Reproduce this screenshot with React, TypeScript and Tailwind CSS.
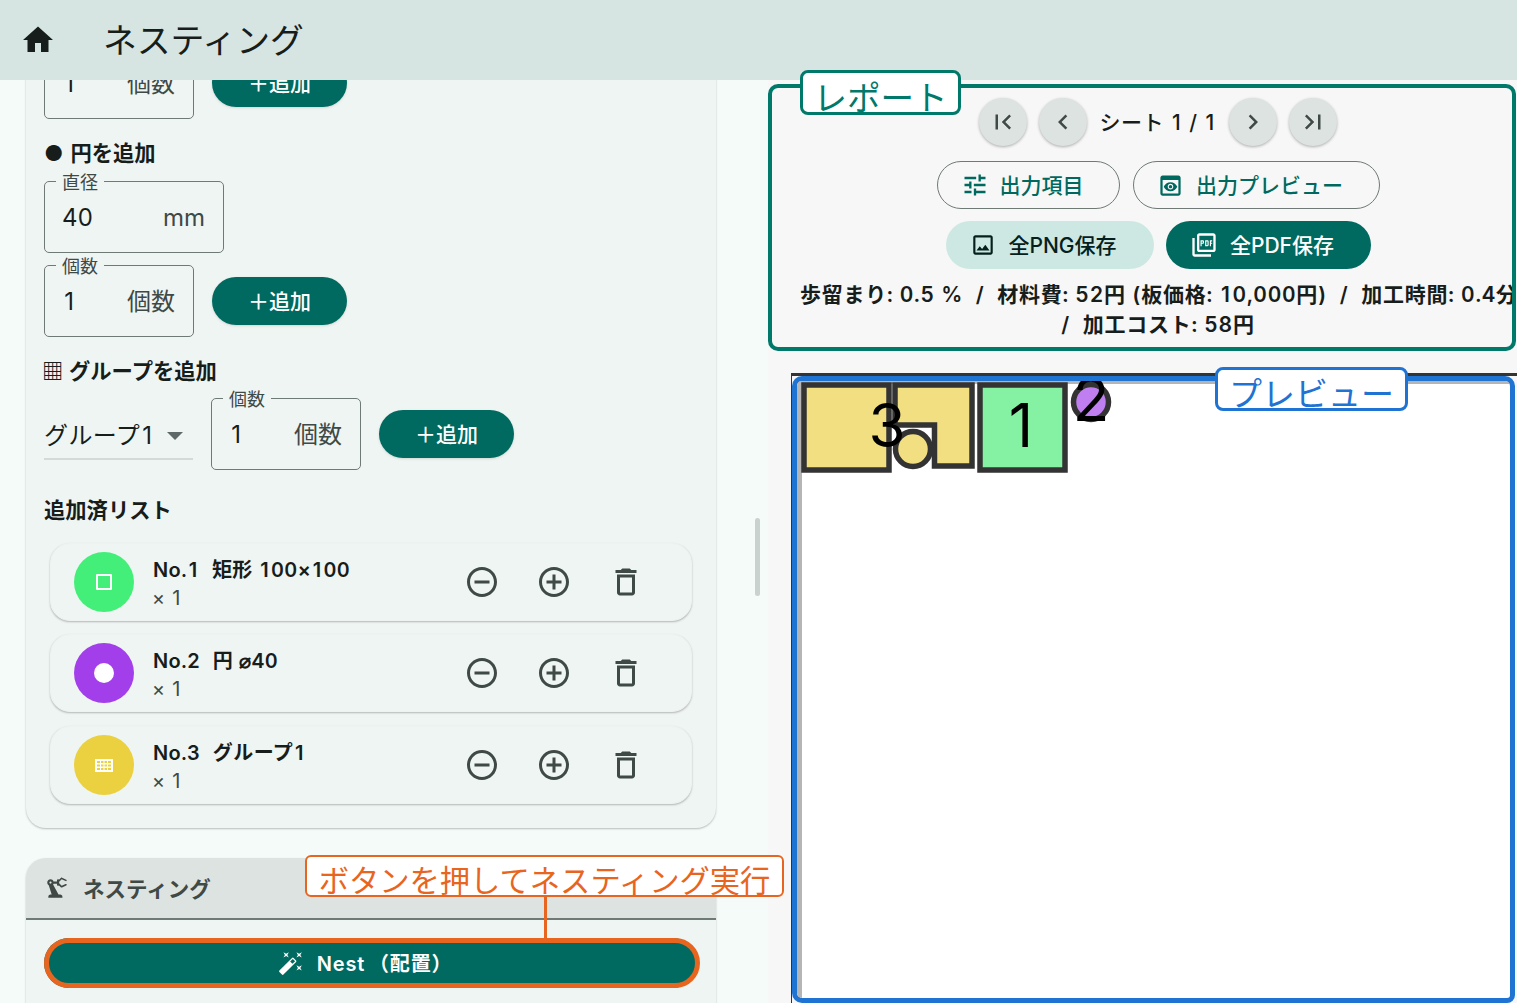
import React from "react";

const FONT = 'Inter, "Noto Sans CJK JP", sans-serif';

function Ic({ d, size = 24, className = "" }: { d: string; size?: number; className?: string }) {
  return (
    <svg width={size} height={size} viewBox="0 0 24 24" fill="currentColor" className={`shrink-0 ${className}`}>
      <path d={d} />
    </svg>
  );
}

function Num({ text }: { text: string }) {
  return (
    <>
      {text.split(/(1)/).map((part, i) =>
        part === "1" ? (
          <span key={i} className="px-[0.09em] [font-feature-settings:normal]">
            1
          </span>
        ) : (
          <React.Fragment key={i}>{part}</React.Fragment>
        ),
      )}
    </>
  );
}

const P = {
  home: "M10 20v-6h4v6h5v-8h3L12 3 2 12h3v8z",
  first: "M18.41 16.59 13.82 12l4.59-4.59L17 6l-6 6 6 6zM6 6h2v12H6z",
  prev: "M15.41 7.41 14 6l-6 6 6 6 1.41-1.41L10.83 12z",
  next: "M10 6 8.59 7.41 13.17 12l-4.58 4.59L10 18l6-6z",
  last: "M5.59 7.41 10.18 12l-4.59 4.59L7 18l6-6-6-6zM16 6h2v12h-2z",
  tune: "M3 17v2h6v-2H3zM3 5v2h10V5H3zm10 16v-2h8v-2h-8v-2h-2v6h2zM7 9v2H3v2h4v2h2V9H7zm14 4v-2H11v2h10zm-6-4h2V7h4V5h-4V3h-2v6z",
  preview:
    "M19 3H5c-1.11 0-2 .9-2 2v14c0 1.1.89 2 2 2h14c1.1 0 2-.9 2-2V5c0-1.1-.89-2-2-2zm0 16H5V7h14v12zm-5.5-6c0 .83-.67 1.5-1.5 1.5s-1.5-.67-1.5-1.5.67-1.5 1.5-1.5 1.5.67 1.5 1.5zM12 9c-2.73 0-5.06 1.66-6 4 .94 2.34 3.27 4 6 4s5.06-1.66 6-4c-.94-2.34-3.27-4-6-4zm0 6.5c-1.38 0-2.5-1.12-2.5-2.5s1.12-2.5 2.5-2.5 2.5 1.12 2.5 2.5-1.12 2.5-2.5 2.5z",
  image:
    "M19 5v14H5V5h14m0-2H5c-1.1 0-2 .9-2 2v14c0 1.1.9 2 2 2h14c1.1 0 2-.9 2-2V5c0-1.1-.9-2-2-2zm-4.86 8.86-3 3.87L9 13.14 6 17h12l-3.86-5.14z",
  pdf: "M20 2H8c-1.1 0-2 .9-2 2v12c0 1.1.9 2 2 2h12c1.1 0 2-.9 2-2V4c0-1.1-.9-2-2-2zm0 14H8V4h12v12zM4 6H2v14c0 1.1.9 2 2 2h14v-2H4V6zm12 6V9c0-.55-.45-1-1-1h-2v5h2c.55 0 1-.45 1-1zm-2-3h1v3h-1V9zm4 2h1v-1h-1V9h1V8h-2v5h1v-2zm-8 0h1c.55 0 1-.45 1-1V9c0-.55-.45-1-1-1H9v5h1v-2zm0-2h1v1h-1V9z",
  minus:
    "M7 11v2h10v-2H7zm5-9C6.48 2 2 6.48 2 12s4.48 10 10 10 10-4.48 10-10S17.52 2 12 2zm0 18c-4.41 0-8-3.59-8-8s3.59-8 8-8 8 3.59 8 8-3.59 8-8 8z",
  plus: "M13 7h-2v4H7v2h4v4h2v-4h4v-2h-4V7zm-1-5C6.48 2 2 6.48 2 12s4.48 10 10 10 10-4.48 10-10S17.52 2 12 2zm0 18c-4.41 0-8-3.59-8-8s3.59-8 8-8 8 3.59 8 8-3.59 8-8 8z",
  trash: "M6 19c0 1.1.9 2 2 2h8c1.1 0 2-.9 2-2V7H6v12zM8 9h8v10H8V9zm7.5-5-1-1h-5l-1 1H5v2h14V4z",
  wand: "M7.5 5.6 10 7 8.6 4.5 10 2 7.5 3.4 5 2l1.4 2.5L5 7zm12 9.8L17 14l1.4 2.5L17 19l2.5-1.4L22 19l-1.4-2.5L22 14zM22 2l-2.5 1.4L17 2l1.4 2.5L17 7l2.5-1.4L22 7l-1.4-2.5zm-7.63 5.29a.9959.9959 0 0 0-1.41 0L1.29 18.96c-.39.39-.39 1.02 0 1.41l2.34 2.34c.39.39 1.02.39 1.41 0L16.7 11.05c.39-.39.39-1.02 0-1.41l-2.33-2.35zm-1.03 5.49-2.12-2.12 2.44-2.44 2.12 2.12-2.44 2.44z",
  robot:
    "M19.93 8.35l-3.6 1.68L14 7.7V6.3l2.33-2.33 3.6 1.68c.38.18.82.01 1-.36.18-.38.01-.82-.36-1l-3.92-1.83c-.38-.18-.83-.1-1.13.2L13.78 4.4c-.18-.24-.46-.4-.78-.4-.55 0-1 .45-1 1v1H8.82C8.4 4.84 7.3 4 6 4 4.34 4 3 5.34 3 7c0 1.1.6 2.05 1.48 2.58L7.08 18H6c-1.1 0-2 .9-2 2v1h13v-1c0-1.1-.9-2-2-2h-1.62L8.41 8.77c.17-.24.31-.49.41-.77H12v1c0 .55.45 1 1 1 .32 0 .6-.16.78-.4l1.74 1.74c.3.3.75.38 1.13.2l3.92-1.83c.38-.18.54-.62.36-1-.18-.37-.62-.54-1-.36zM6 8c-.55 0-1-.45-1-1s.45-1 1-1 1 .45 1 1-.45 1-1 1z",
};

function Field({ label, value, unit, w }: { label: string; value: string; unit: string; w: string }) {
  return (
    <div className={`relative h-[72px] ${w} shrink-0 rounded-[5px] border border-[#6f7976] flex items-center justify-between pl-[17px] pr-[18px]`}>
      <span className="absolute -top-[8px] left-[11px] bg-[#eff5f3] px-[6px] text-[18px] leading-[18px] text-[#3f4946]">{label}</span>
      <span className="text-[24px] leading-[36px] mt-[2px] text-[#171d1b]">
        <Num text={value} />
      </span>
      <span className="text-[24px] leading-[36px] mt-[2px] text-[#3f4946]">{unit}</span>
    </div>
  );
}

function AddBtn() {
  return (
    <div className="h-[48px] w-[135px] shrink-0 rounded-full bg-[#006a60] text-white flex items-center justify-center pt-[2px] text-[21px] font-medium shadow-sm">
      ＋追加
    </div>
  );
}

function Item({ no, title, color, icon, mt }: { no: string; title: string; color: string; icon: React.ReactNode; mt: string }) {
  return (
    <div className={`ml-[6px] mr-[6px] ${mt} h-[78px] rounded-[20px] bg-[#eff5f3] border border-[#eef2f0] shadow-[0_1px_2px_rgba(0,0,0,0.25)] flex items-center pl-[23px]`}>
      <div className={`h-[60px] w-[60px] rounded-full flex items-center justify-center ${color}`}>{icon}</div>
      <div className="ml-[19px] w-[311px] pt-[4px]">
        <div className="text-[20px] leading-[28px] font-semibold tracking-[0.4px] text-[#171d1b] whitespace-pre">
          <Num text={no} />  <span className="ml-[1px]"><Num text={title} /></span>
        </div>
        <div className="-ml-[1px] text-[20px] leading-[28px] text-[#3f4946]">
          <Num text="× 1" />
        </div>
      </div>
      <div className="flex items-center gap-[36px] text-[#3f4946]">
        <Ic d={P.minus} size={36} />
        <Ic d={P.plus} size={36} />
        <Ic d={P.trash} size={36} />
      </div>
    </div>
  );
}

function Round({ d }: { d: string }) {
  return (
    <div className="h-[48px] w-[48px] rounded-full bg-[#dde3e1] text-[#3f4946] shadow-[0_1px_3px_rgba(0,0,0,0.3)] flex items-center justify-center">
      <Ic d={d} size={30} />
    </div>
  );
}

export default function App() {
  return (
    <div
      className="relative h-[1003px] w-[1517px] overflow-hidden flex flex-col bg-[#f5fbf8] [font-feature-settings:'tnum']"
      style={{ fontFamily: FONT }}
    >
      <header className="relative z-10 h-[80px] shrink-0 bg-[#d6e5e1] flex items-center pl-[20px] text-[#171d1b]">
        <Ic d={P.home} size={36} />
        <h1 className="ml-[47px] mt-[2px] text-[33.8px] font-normal leading-none">ネスティング</h1>
      </header>

      <div className="flex flex-1 min-h-0">
        <aside className="relative w-[768px] shrink-0 overflow-hidden pl-[26px] pr-[52px]">
          <div className="-mt-[60px] rounded-b-[20px] bg-[#eff5f3] shadow-[0_1px_2px_rgba(0,0,0,0.25)] pl-[18px] pr-[18px] pt-[27px] pb-[24px] h-[808px]">
            <div className="flex items-center gap-[18px]">
              <Field label="個数" value="1" unit="個数" w="w-[150px]" />
              <AddBtn />
            </div>
            <div className="mt-[19px] text-[21.3px] leading-[30px] font-semibold text-[#171d1b] whitespace-pre">
              <span>●</span>
              <span className="ml-[7px]">円を追加</span>
            </div>
            <div className="mt-[13px]">
              <Field label="直径" value="40" unit="mm" w="w-[180px]" />
            </div>
            <div className="mt-[12px] flex items-center gap-[18px]">
              <Field label="個数" value="1" unit="個数" w="w-[150px]" />
              <AddBtn />
            </div>
            <div className="mt-[19px] -ml-[2px] text-[21.3px] leading-[30px] font-semibold text-[#171d1b]">▦ グループを追加</div>
            <div className="mt-[12px] flex">
              <div className="self-end mb-[10px] h-[50px] w-[149px] border-b-2 border-[#d5dad8] flex items-center pt-[4px] text-[24px] tracking-[0.4px] text-[#171d1b]">
                <span><Num text="グループ1" /></span>
                <span className="ml-[12px] h-0 w-0 border-x-[8px] border-t-[8px] border-x-transparent border-t-[#5f6967]" />
              </div>
              <div className="ml-[18px]">
                <Field label="個数" value="1" unit="個数" w="w-[150px]" />
              </div>
              <div className="ml-[18px] self-center">
                <AddBtn />
              </div>
            </div>
            <div className="mt-[25px] text-[21.3px] leading-[30px] font-semibold text-[#171d1b]">追加済リスト</div>
            <Item
              no="No.1"
              title="矩形 100×100"
              color="bg-[#43ef78]"
              mt="mt-[18px]"
              icon={<span className="h-[16px] w-[16px] border-[2.5px] border-white rounded-[1px]" />}
            />
            <Item
              no="No.2"
              title="円 ⌀40"
              color="bg-[#a33fea]"
              mt="mt-[13px]"
              icon={<span className="h-[20px] w-[20px] rounded-full bg-white" />}
            />
            <Item
              no="No.3"
              title="グループ1"
              color="bg-[#ebd040]"
              mt="mt-[14px]"
              icon={
                <svg width="18" height="13" viewBox="0 0 18 13" fill="#fff" fillRule="evenodd">
                  <path d="M0 0h18v13H0zM2 2v2h3V2zM6 2v2h2.5V2zM9.5 2v2H12V2zM13 2v2h3V2zM2 5.5v2h3v-2zM6 5.5v2h2.5v-2zM9.5 5.5v2H12v-2zM13 5.5v2h3v-2zM2 9v2h3V9zM6 9v2h2.5V9zM9.5 9v2H12V9zM13 9v2h3V9z" />
                </svg>
              }
            />
          </div>

          <div className="mt-[30px] h-[200px] rounded-[20px] bg-[#eff5f3] shadow-[0_1px_2px_rgba(0,0,0,0.25)] overflow-hidden">
            <div className="h-[62px] bg-[#dde3e1] border-b-2 border-[#6f7976] flex items-center pl-[18px] text-[21.5px] font-semibold text-[#3f4946]">
              <Ic d={P.robot} size={26} />
              <span className="ml-[13px] mt-[3px]">ネスティング</span>
            </div>
            <div className="px-[18px] pt-[18px]">
              <div className="h-[50px] rounded-full bg-[#006a60] text-white flex items-center justify-center pr-[12px] text-[20px] font-semibold tracking-[0.8px]">
                <Ic d={P.wand} size={26} />
                <span className="ml-[13px] mt-[1px]">
                  Nest<span className="ml-[4px]">（配置）</span>
                </span>
              </div>
            </div>
          </div>

          <div className="absolute right-[8px] top-[438px] h-[78px] w-[5px] rounded-full bg-[#c9d2cf]" />
        </aside>

        <main className="relative flex-1 min-w-0 bg-[#f7f7f7] flex flex-col">
          <section className="relative mt-[4px] mr-[1px] h-[267px] shrink-0 rounded-[10px] border-[4px] border-[#00796b] pl-[32px] overflow-hidden">
            <div className="flex items-center justify-center gap-[12px] pt-[10px]">
              <Round d={P.first} />
              <Round d={P.prev} />
              <span className="text-[21px] font-medium tracking-[0.5px] text-[#171d1b] mt-[2px] whitespace-pre">
                <Num text="シート 1 / 1" />
              </span>
              <Round d={P.next} />
              <Round d={P.last} />
            </div>
            <div className="mt-[15px] flex items-center justify-center gap-[13px] text-[#00695f] text-[21px] font-medium">
              <div className="h-[48px] w-[183px] rounded-full border border-[#6f7976] flex items-center justify-center pr-[12px]">
                <Ic d={P.tune} size={28} />
                <span className="ml-[11px] mt-[2px]">出力項目</span>
              </div>
              <div className="h-[48px] w-[247px] rounded-full border border-[#6f7976] flex items-center justify-center pr-[12px]">
                <Ic d={P.preview} size={27} />
                <span className="ml-[12px] mt-[2px]">出力プレビュー</span>
              </div>
            </div>
            <div className="mt-[12px] flex items-center justify-center gap-[12px] text-[21px] font-medium">
              <div className="h-[48px] w-[208px] rounded-full bg-[#cde8e2] text-[#05201c] flex items-center justify-center pr-[12px]">
                <Ic d={P.image} size={26} />
                <span className="ml-[12px] mt-[2px]">全PNG保存</span>
              </div>
              <div className="h-[48px] w-[205px] rounded-full bg-[#006a60] text-white flex items-center justify-center pr-[12px]">
                <Ic d={P.pdf} size={28} />
                <span className="ml-[12px] mt-[2px]">全PDF保存</span>
              </div>
            </div>
            <div className="mt-[11px] -ml-[4px] text-center text-[21px] leading-[30px] font-semibold tracking-[0.75px] text-[#171d1b] whitespace-pre">
              <div>
                <Num text="歩留まり: 0.5 %  /  材料費: 52円 (板価格: 10,000円)  /  加工時間: 0.4分" />
              </div>
              <div className="pl-[4px]">/  加工コスト: 58円</div>
            </div>
          </section>
          <div className="absolute left-[32px] -top-[10px] z-20 h-[45px] w-[161px] rounded-[8px] border-[3px] border-[#00796b] bg-white flex items-center justify-center pt-[12px] text-[33.5px] font-normal text-[#00796b]">
            レポート
          </div>

          <section className="mt-[22px] ml-[23px] flex-1 min-h-0 border-t-[3px] border-l border-[#333333]">
            <div className="h-full rounded-[10px] rounded-br-[8px] border-[5px] border-[#1f73d2] mr-[2px] mb-[2px] overflow-hidden bg-white">
              <svg width="716" height="620" viewBox="797 381 716 620" className="block [font-feature-settings:normal]">
                <rect x="797" y="381" width="716" height="3" fill="#b5b5b5" />
                <rect x="797" y="381" width="5" height="620" fill="#b5b5b5" />
                <path d="M804 385 H889 V470 H804 Z" fill="#f1df82" stroke="#333333" strokeWidth="5.5" />
                <path d="M895 385 H972 V466 H934.5 V425 H895 Z" fill="#f1df82" stroke="#333333" strokeWidth="5.5" />
                <circle cx="913" cy="449" r="17.5" fill="#f1df82" stroke="#333333" strokeWidth="5.5" />
                <rect x="980" y="385" width="85" height="85" fill="#85f2a3" stroke="#333333" strokeWidth="5.5" />
                <circle cx="1091" cy="402" r="17.5" fill="#c07ff0" stroke="#333333" strokeWidth="5.5" />
                <text x="887" y="447" textAnchor="middle" fontSize="60" fill="#000" fontFamily="Inter, sans-serif">3</text>
                <text x="1021" y="447" textAnchor="middle" fontSize="60" fill="#000" fontFamily="Inter, sans-serif">1</text>
                <text x="1091" y="421" textAnchor="middle" fontSize="60" fill="#000" fontFamily="Inter, sans-serif">2</text>
              </svg>
            </div>
          </section>
          <div className="absolute left-[447px] top-[287px] z-20 h-[44px] w-[193px] rounded-[8px] border-[3px] border-[#1f73d2] bg-white flex items-center justify-center pt-[12px] text-[33px] font-normal text-[#1f73d2]">
            プレビュー
          </div>
        </main>
      </div>

      <div className="absolute left-[305px] top-[855px] z-20 h-[42px] w-[479px] rounded-[6px] border-[2.5px] border-[#e8651f] bg-white flex items-center justify-center pt-[11px] text-[30.3px] font-normal text-[#e8651f] whitespace-nowrap">
        ボタンを押してネスティング実行
      </div>
      <div className="absolute left-[543.5px] top-[897px] z-20 h-[42px] w-[3px] bg-[#e8651f]" />
      <div className="absolute left-[44px] top-[938px] z-20 h-[50px] w-[656px] rounded-full border-[5px] border-[#e8651f]" />
    </div>
  );
}
